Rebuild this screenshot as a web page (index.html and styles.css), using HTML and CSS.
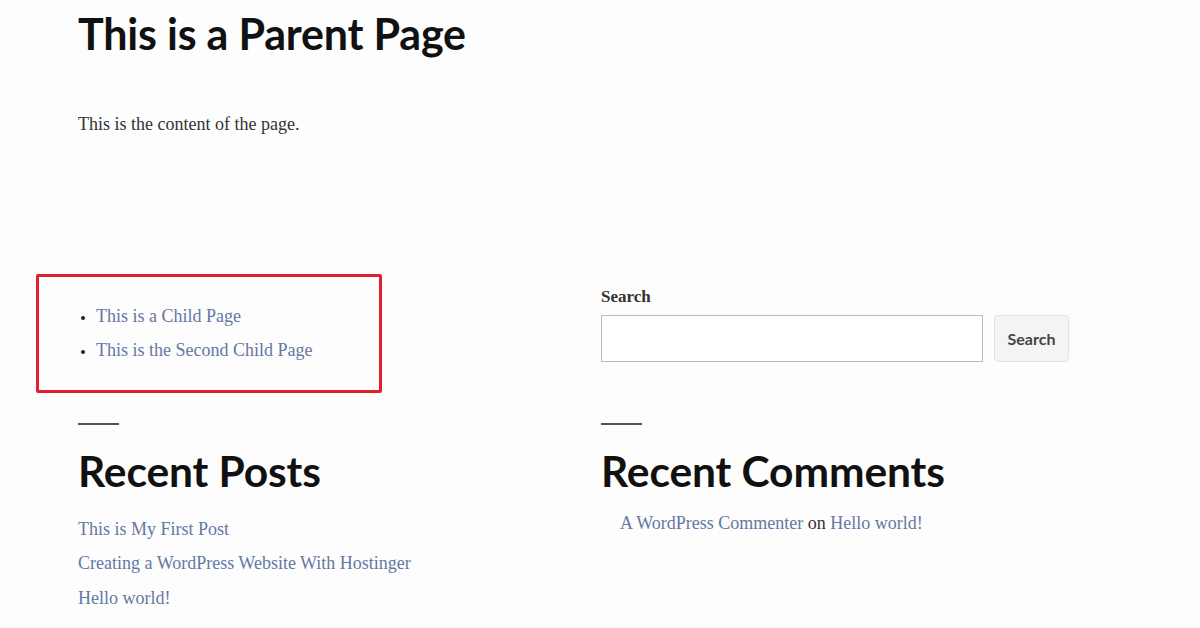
FILE: index.html
```html
<!DOCTYPE html>
<html lang="en">
<head>
<meta charset="utf-8">
<title>This is a Parent Page</title>
<link rel="stylesheet" href="styles.css">
</head>
<body>
<main class="page">
  <header class="entry">
    <h1 class="entry-title">This is a Parent Page</h1>
    <p class="entry-content">This is the content of the page.</p>
  </header>
  <section class="widgets">
    <div class="highlight">
      <ul class="child-list">
        <li><a href="#">This is a Child Page</a></li>
        <li><a href="#">This is the Second Child Page</a></li>
      </ul>
    </div>
    <form class="search">
      <label class="search-label" for="s">Search</label>
      <div class="search-row">
        <input id="s" class="search-input" type="text">
        <button class="search-btn" type="button">Search</button>
      </div>
    </form>
    <div class="widget">
      <hr class="sep">
      <h2 class="widget-title">Recent Posts</h2>
      <ul class="posts">
        <li><a href="#">This is My First Post</a></li>
        <li><a href="#">Creating a WordPress Website With Hostinger</a></li>
        <li><a href="#">Hello world!</a></li>
      </ul>
    </div>
    <div class="widget">
      <hr class="sep">
      <h2 class="widget-title">Recent Comments</h2>
      <ul class="comments">
        <li><a href="#">A WordPress Commenter</a> on <a href="#">Hello world!</a></li>
      </ul>
    </div>
  </section>
</main>
</body>
</html>
```
FILE: styles.css
```css
html, body {
  margin: 0;
  padding: 0;
  background: #fdfdfd;
}
body {
  font-family: "Liberation Serif", "Times New Roman", serif;
  color: #333;
}
a {
  color: #6478a3;
  text-decoration: none;
}
.page {
  padding: 8px 0 0 78px;
}
.entry-title {
  font-family: Lato, "Noto Sans", sans-serif;
  font-weight: 700;
  font-size: 43px;
  letter-spacing: -0.2px;
  line-height: 1.2;
  color: #111;
  margin: 0;
}
.entry-content {
  font-size: 18px;
  margin: 52px 0 0 0;
  line-height: 25px;
}
.widgets {
  display: grid;
  grid-template-columns: 480px 600px;
  column-gap: 43px;
  align-items: start;
  margin-top: 137px;
}
.highlight {
  margin-left: -42px;
  width: 340px;
  height: 113px;
  border: 3px solid #e0202a;
  border-radius: 2px;
}
.child-list {
  margin: 22px 0 0 0;
  padding-left: 57px;
  list-style: disc;
  font-size: 18px;
  line-height: 34px;
}
.child-list li::marker {
  color: #222;
  font-size: 15px;
}
.widget {
  padding-top: 30px;
}
.sep {
  width: 41px;
  margin: 0;
  border: 0;
  border-top: 2px solid #555;
}
.widget-title {
  font-family: Lato, "Noto Sans", sans-serif;
  font-weight: 700;
  font-size: 42.5px;
  letter-spacing: -0.1px;
  line-height: 1.2;
  color: #111;
  margin: 20px 0 0 0;
}
.posts {
  list-style: none;
  margin: 16px 0 0 0;
  padding: 0;
  font-size: 18px;
  line-height: 34.5px;
}
.comments {
  list-style: none;
  margin: 10px 0 0 0;
  padding: 0 0 0 19px;
  font-size: 18px;
  line-height: 34px;
}
.search {
  padding-top: 12px;
}
.search-label {
  display: block;
  font-weight: 700;
  font-size: 17px;
  line-height: 22px;
  color: #333;
  margin-bottom: 7px;
}
.search-row {
  display: flex;
  gap: 11px;
}
.search-input {
  width: 382px;
  height: 47px;
  box-sizing: border-box;
  border: 1px solid #bbb;
  background: #fff;
  margin: 0;
}
.search-btn {
  height: 47px;
  width: 75px;
  box-sizing: border-box;
  border: 1px solid #e2e2e2;
  border-radius: 4px;
  background: #f4f4f4;
  font-family: Lato, "Noto Sans", sans-serif;
  font-weight: 700;
  font-size: 16px;
  color: #444;
  padding: 0;
  margin: 0;
}
```
